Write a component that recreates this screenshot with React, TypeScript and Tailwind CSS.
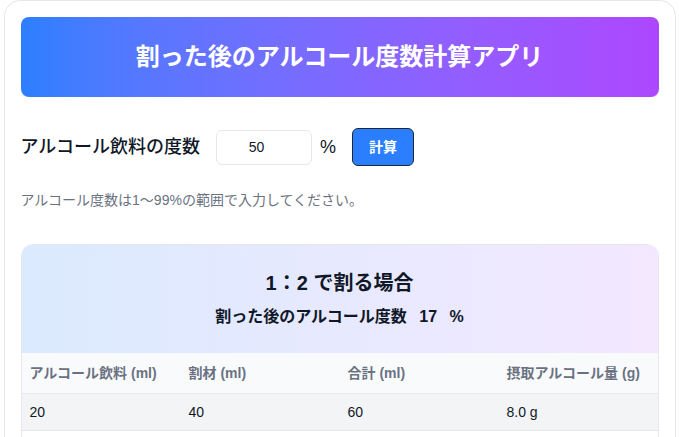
import { useState } from "react";

const rows = [
  { base: 20, mixer: 40 },
  { base: 30, mixer: 60 },
  { base: 40, mixer: 80 },
  { base: 50, mixer: 100 },
];

export default function App() {
  const [degree, setDegree] = useState("50");
  const pct = Number(degree) || 0;
  const after = Math.round(pct / 3);

  return (
    <div className="min-h-screen bg-white font-['Liberation_Sans','Noto_Sans_CJK_JP',sans-serif] text-gray-900">
      <div className="max-w-2xl mx-auto bg-white border border-gray-200 rounded-2xl p-4">
        <div className="rounded-lg bg-gradient-to-r from-blue-500 to-purple-500 py-6 text-center">
          <h1 className="text-2xl font-bold text-white">割った後のアルコール度数計算アプリ</h1>
        </div>

        <div className="mt-[31px] flex items-center">
          <label className="text-lg font-medium">アルコール飲料の度数</label>
          <input
            type="number"
            min={1}
            max={99}
            value={degree}
            onChange={(e) => setDegree(e.target.value)}
            className="ml-4 w-24 h-[35px] rounded-md border border-gray-200 text-center text-sm outline-none"
          />
          <span className="ml-2 text-lg">%</span>
          <button className="ml-4 px-4 py-2 text-sm font-bold text-white bg-blue-500 border border-gray-800 rounded-md">
            計算
          </button>
        </div>

        <p className="mt-6 text-sm text-gray-500">アルコール度数は1〜99%の範囲で入力してください。</p>

        <div className="mt-[34px] rounded-xl border border-gray-200 overflow-hidden">
          <div className="bg-gradient-to-r from-blue-100 to-purple-100 p-6 text-center">
            <h2 className="text-xl font-bold">1：2 で割る場合</h2>
            <p className="mt-2 text-base font-bold">
              割った後のアルコール度数 <span className="mx-2">{after}</span> %
            </p>
          </div>
          <table className="w-full table-fixed text-sm text-left">
            <thead className="bg-gray-50">
              <tr>
                <th className="px-2 py-2.5 font-semibold text-gray-500">アルコール飲料 (ml)</th>
                <th className="px-2 py-2.5 font-semibold text-gray-500">割材 (ml)</th>
                <th className="px-2 py-2.5 font-semibold text-gray-500">合計 (ml)</th>
                <th className="px-2 py-2.5 font-semibold text-gray-500">摂取アルコール量 (g)</th>
              </tr>
            </thead>
            <tbody>
              {rows.map((r, i) => (
                <tr key={r.base} className={`border-t border-gray-200 ${i % 2 === 0 ? "bg-gray-100" : "bg-white"}`}>
                  <td className="px-2 py-2">{r.base}</td>
                  <td className="px-2 py-2">{r.mixer}</td>
                  <td className="px-2 py-2">{r.base + r.mixer}</td>
                  <td className="px-2 py-2">{((r.base * pct) / 100 * 0.8).toFixed(1)} g</td>
                </tr>
              ))}
            </tbody>
          </table>
        </div>
      </div>
    </div>
  );
}
